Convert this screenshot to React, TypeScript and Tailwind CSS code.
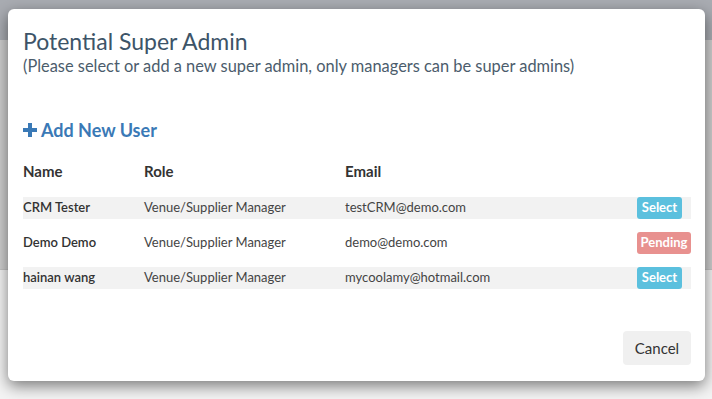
import React from "react";

const users = [
  { name: "CRM Tester", role: "Venue/Supplier Manager", email: "testCRM@demo.com", status: "select" },
  { name: "Demo Demo", role: "Venue/Supplier Manager", email: "demo@demo.com", status: "pending" },
  { name: "hainan wang", role: "Venue/Supplier Manager", email: "mycoolamy@hotmail.com", status: "select" },
];

export default function App() {
  return (
    <div
      className="relative w-[712px] h-[399px] overflow-hidden bg-[#f4f4f4]"
      style={{ fontFamily: "Lato, 'Open Sans', sans-serif" }}
    >
      {/* page behind the overlay */}
      <div className="h-[40px] bg-[#a9acb2]" />
      <div className="h-[230px] bg-[#cfcfcf] border-b border-[#c4c4c4]" />

      {/* Modal */}
      <div className="absolute left-[8px] top-[9px] w-[697px] h-[372px] bg-white rounded-[6px] shadow-[0_5px_15px_rgba(0,0,0,0.5)] px-[15px] pt-[18px] flex flex-col">
        <h2 className="text-[23px] leading-[28px] text-[#3d5468]">Potential Super Admin</h2>
        <p className="mt-[1px] text-[16.4px] leading-[20px] text-[#4b5c6c]">
          (Please select or add a new super admin, only managers can be super admins)
        </p>

        <button className="mt-[44px] flex items-center gap-[4px] text-[#3a79b6] font-bold text-[18px] leading-[20px] self-start">
          <svg width="14" height="14" viewBox="0 0 14 14">
            <path d="M5 0h4v5h5v4H9v5H5V9H0V5h5z" fill="#3a79b6" />
          </svg>
          Add New User
        </button>

        <div className="mt-[21px] grid grid-cols-[121px_201px_1fr] text-[15px] font-bold text-[#333] leading-[20px]">
          <span>Name</span>
          <span>Role</span>
          <span>Email</span>
        </div>

        <div className="mt-[16px] flex flex-col gap-[13px] w-[668px]">
          {users.map((u, i) => (
            <div
              key={u.email}
              className={`h-[22px] flex items-center text-[13px] text-[#444] ${i % 2 === 0 ? "bg-[#f2f2f2]" : ""}`}
            >
              <span className="w-[121px] font-semibold text-[#333]">{u.name}</span>
              <span className="w-[201px]">{u.role}</span>
              <span className="flex-1">{u.email}</span>
              {u.status === "select" ? (
                <span className="mr-[9px] h-[22px] w-[45px] rounded-[3px] bg-[#5bc0de] text-white text-[13px] font-bold flex items-center justify-center">
                  Select
                </span>
              ) : (
                <span className="h-[22px] w-[54px] rounded-[3px] bg-[#e8918f] text-white text-[13px] font-bold flex items-center justify-center">
                  Pending
                </span>
              )}
            </div>
          ))}
        </div>

        <div className="mt-auto mb-[16px] flex justify-end w-[668px]">
          <button className="h-[34px] w-[68px] rounded-[4px] bg-[#f0f0f0] text-[15px] text-[#333]">Cancel</button>
        </div>
      </div>
    </div>
  );
}
